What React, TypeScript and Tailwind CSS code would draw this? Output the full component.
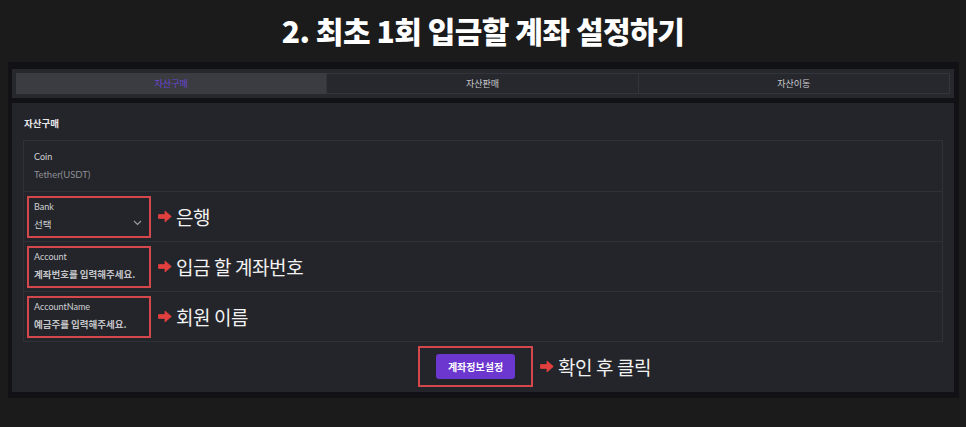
import React from "react";

const KR = "font-['Noto_Sans_CJK_KR',sans-serif]";

function Arrow() {
  return (
    <svg width="14" height="13" viewBox="0 0 14 13" className="shrink-0">
      <path d="M0.5 4.6 H7 V1 L13.3 6.5 L7 12 V8.4 H0.5 Z" fill="#e2403f" stroke="#e2403f" strokeWidth="0.8" strokeLinejoin="round" />
    </svg>
  );
}

function Note({ text }: { text: string }) {
  return (
    <div className="flex items-center ml-[7px] gap-[4px]">
      <Arrow />
      <span className={`${KR} text-[19px] leading-none text-[#f2f2f2] tracking-[-0.4px]`}>{text}</span>
    </div>
  );
}

function Field({ label, value, chevron, note, valueClass }: { label: string; value: string; chevron?: boolean; note: string; valueClass: string }) {
  return (
    <div className="h-[50px] border-t border-[#303136] flex items-center pl-[3px]">
      <div className="w-[124px] h-[42px] border-2 border-[#d4484b] pl-[5px] pr-[6px] pt-[3px] relative">
        <div className="text-[9px] leading-[12px] text-[#d0d1d5] font-['Lato',sans-serif]">{label}</div>
        <div className={`${KR} text-[9.5px] leading-[14px] mt-[4px] ${valueClass}`}>{value}</div>
        {chevron && (
          <svg width="9" height="6" viewBox="0 0 9 6" className="absolute right-[7px] top-[22px]">
            <path d="M1 1 L4.5 4.5 L8 1" fill="none" stroke="#9a9ba0" strokeWidth="1.2" />
          </svg>
        )}
      </div>
      <Note text={note} />
    </div>
  );
}

export default function App() {
  return (
    <div className="w-[966px] h-[427px] bg-[#1b1b1c] flex flex-col overflow-hidden">
      <div className="h-[62px] flex items-center justify-center pb-[2px]">
        <h1 className={`${KR} text-[30px] font-black text-white tracking-[-0.5px] leading-none`}>
          2. 최초 1회 입금할 계좌 설정하기
        </h1>
      </div>
      <div className="ml-[8px] w-[951px] h-[336px] bg-[#121216] pt-[7px] pl-[4px] pr-[5px] pb-[6px] flex flex-col gap-[5px]">
        <div className="h-[29px] bg-[#27282d] p-[4px] flex">
          <div className={`${KR} flex-1 bg-[#3b3c42] flex items-center justify-center text-[9px] text-[#6c45d4]`}>자산구매</div>
          <div className={`${KR} flex-1 border border-[#34353a] flex items-center justify-center text-[9px] text-[#c8c9cd]`}>자산판매</div>
          <div className={`${KR} flex-1 border border-[#34353a] border-l-0 flex items-center justify-center text-[9px] text-[#c8c9cd]`}>자산이동</div>
        </div>
        <div className="flex-1 bg-[#24252a] pl-[11px] pr-[11px] pt-[13px] flex flex-col">
          <div className={`${KR} text-[9.5px] font-bold text-[#e8e8ea] leading-[14px] pl-[1px]`}>자산구매</div>
          <div className="mt-[10px] border border-[#303136] border-t-0">
            <div className="h-[51px] border-t border-[#303136] pl-[10px] pt-[10px]">
              <div className="text-[9px] leading-[12px] text-[#d0d1d5] font-['Lato',sans-serif]">Coin</div>
              <div className="text-[9.5px] leading-[14px] mt-[5px] text-[#8d8e93] font-['Lato',sans-serif]">Tether(USDT)</div>
            </div>
            <Field label="Bank" value="선택" chevron note="은행" valueClass="text-[#d0d1d5]" />
            <Field label="Account" value="계좌번호를 입력해주세요." note="입금 할 계좌번호" valueClass="text-[#c4c5c9] font-bold" />
            <Field label="AccountName" value="예금주를 입력해주세요." note="회원 이름" valueClass="text-[#c4c5c9] font-bold" />
          </div>
          <div className="mt-[4px] flex items-center pl-[395px]">
            <div className="w-[115px] h-[41px] border-2 border-[#d4484b] flex items-center justify-center">
              <button className={`${KR} w-[79px] h-[25px] rounded-[3px] bg-[#6c37cf] text-white text-[10px] font-bold`}>계좌정보설정</button>
            </div>
            <Note text="확인 후 클릭" />
          </div>
        </div>
      </div>
    </div>
  );
}
